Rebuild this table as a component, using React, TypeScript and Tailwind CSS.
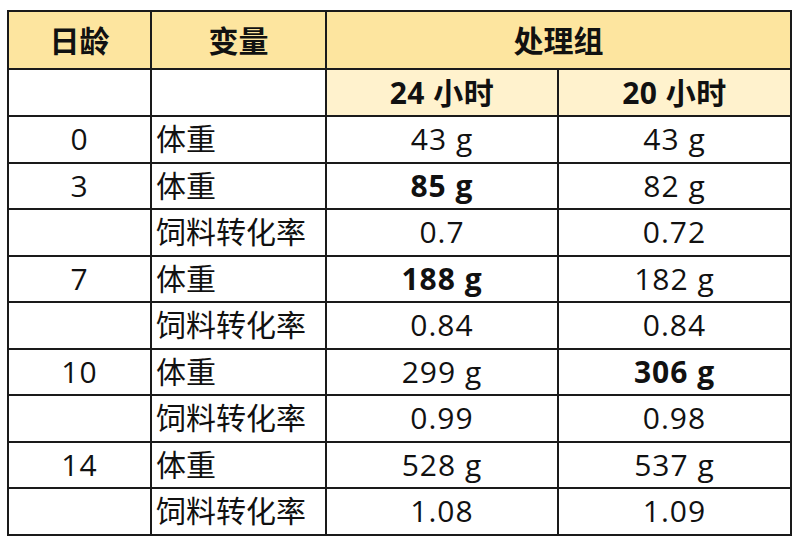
const font = { fontFamily: '"Open Sans", "Noto Sans CJK SC", sans-serif' }

type Row = { day: string; name: string; a: string; b: string; boldA?: boolean; boldB?: boolean }

const rows: Row[] = [
  { day: '0', name: '体重', a: '43 g', b: '43 g' },
  { day: '3', name: '体重', a: '85 g', b: '82 g', boldA: true },
  { day: '', name: '饲料转化率', a: '0.7', b: '0.72' },
  { day: '7', name: '体重', a: '188 g', b: '182 g', boldA: true },
  { day: '', name: '饲料转化率', a: '0.84', b: '0.84' },
  { day: '10', name: '体重', a: '299 g', b: '306 g', boldB: true },
  { day: '', name: '饲料转化率', a: '0.99', b: '0.98' },
  { day: '14', name: '体重', a: '528 g', b: '537 g' },
  { day: '', name: '饲料转化率', a: '1.08', b: '1.09' },
]

export default function App() {
  return (
    <div className="w-[800px] h-[547px] bg-white pl-[7px] pt-[10px]" style={font}>
      <table className="table-fixed border-collapse w-[783px] text-[30px] text-[#111]">
        <colgroup>
          <col className="w-[143px]" />
          <col className="w-[175px]" />
          <col className="w-[232px]" />
          <col className="w-[233px]" />
        </colgroup>
        <thead>
          <tr className="h-[58px] bg-[#fde59f] font-bold">
            <th className="border-2 border-[#1a1a1a] text-center">日龄</th>
            <th className="border-2 border-[#1a1a1a] text-center">变量</th>
            <th colSpan={2} className="border-2 border-[#1a1a1a] text-center">处理组</th>
          </tr>
          <tr className="h-[47px] font-bold">
            <th className="border-2 border-[#1a1a1a] bg-white"></th>
            <th className="border-2 border-[#1a1a1a] bg-white"></th>
            <th className="border-2 border-[#1a1a1a] bg-[#fff2cd] text-center leading-none tracking-[0.5px]">24 小时</th>
            <th className="border-2 border-[#1a1a1a] bg-[#fff2cd] text-center leading-none tracking-[0.5px]">20 小时</th>
          </tr>
        </thead>
        <tbody>
          {rows.map((r, i) => (
            <tr key={i} className="h-[46.5px]">
              <td className="border-2 border-[#1a1a1a] text-center leading-none tracking-[1px]">{r.day}</td>
              <td className="border-2 border-[#1a1a1a] pl-[4px] leading-none">{r.name}</td>
              <td className={`border-2 border-[#1a1a1a] text-center leading-none tracking-[1px] ${r.boldA ? 'font-bold' : ''}`}>{r.a}</td>
              <td className={`border-2 border-[#1a1a1a] text-center leading-none tracking-[1px] ${r.boldB ? 'font-bold' : ''}`}>{r.b}</td>
            </tr>
          ))}
        </tbody>
      </table>
    </div>
  )
}
